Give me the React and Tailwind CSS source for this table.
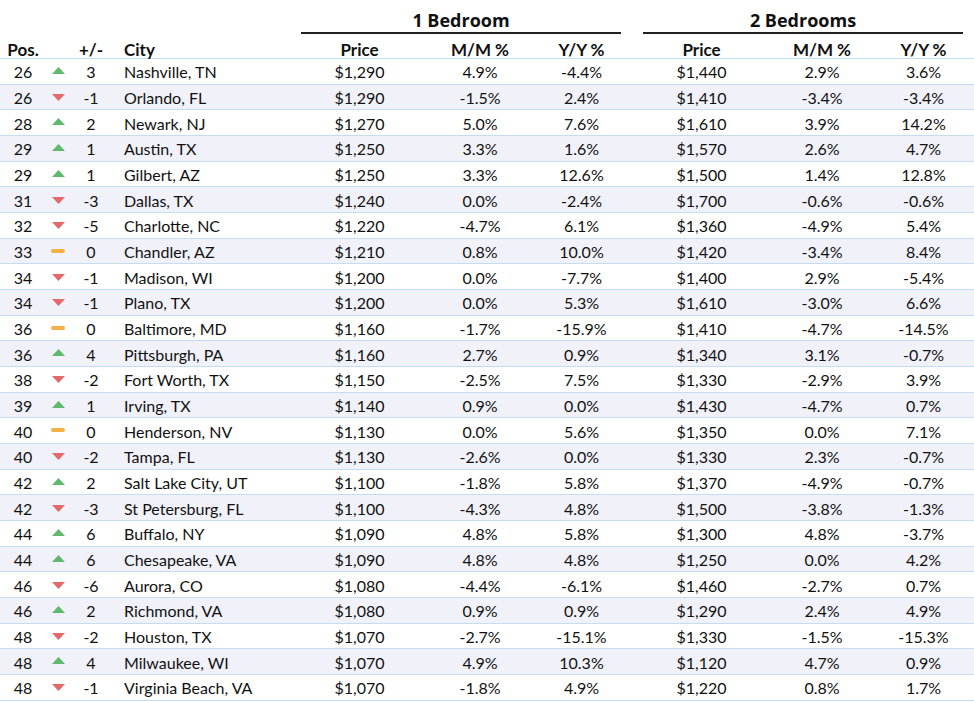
import React from "react";

const rows = [
  [26, "up", 3, "Nashville, TN", "$1,290", "4.9%", "-4.4%", "$1,440", "2.9%", "3.6%"],
  [26, "down", -1, "Orlando, FL", "$1,290", "-1.5%", "2.4%", "$1,410", "-3.4%", "-3.4%"],
  [28, "up", 2, "Newark, NJ", "$1,270", "5.0%", "7.6%", "$1,610", "3.9%", "14.2%"],
  [29, "up", 1, "Austin, TX", "$1,250", "3.3%", "1.6%", "$1,570", "2.6%", "4.7%"],
  [29, "up", 1, "Gilbert, AZ", "$1,250", "3.3%", "12.6%", "$1,500", "1.4%", "12.8%"],
  [31, "down", -3, "Dallas, TX", "$1,240", "0.0%", "-2.4%", "$1,700", "-0.6%", "-0.6%"],
  [32, "down", -5, "Charlotte, NC", "$1,220", "-4.7%", "6.1%", "$1,360", "-4.9%", "5.4%"],
  [33, "flat", 0, "Chandler, AZ", "$1,210", "0.8%", "10.0%", "$1,420", "-3.4%", "8.4%"],
  [34, "down", -1, "Madison, WI", "$1,200", "0.0%", "-7.7%", "$1,400", "2.9%", "-5.4%"],
  [34, "down", -1, "Plano, TX", "$1,200", "0.0%", "5.3%", "$1,610", "-3.0%", "6.6%"],
  [36, "flat", 0, "Baltimore, MD", "$1,160", "-1.7%", "-15.9%", "$1,410", "-4.7%", "-14.5%"],
  [36, "up", 4, "Pittsburgh, PA", "$1,160", "2.7%", "0.9%", "$1,340", "3.1%", "-0.7%"],
  [38, "down", -2, "Fort Worth, TX", "$1,150", "-2.5%", "7.5%", "$1,330", "-2.9%", "3.9%"],
  [39, "up", 1, "Irving, TX", "$1,140", "0.9%", "0.0%", "$1,430", "-4.7%", "0.7%"],
  [40, "flat", 0, "Henderson, NV", "$1,130", "0.0%", "5.6%", "$1,350", "0.0%", "7.1%"],
  [40, "down", -2, "Tampa, FL", "$1,130", "-2.6%", "0.0%", "$1,330", "2.3%", "-0.7%"],
  [42, "up", 2, "Salt Lake City, UT", "$1,100", "-1.8%", "5.8%", "$1,370", "-4.9%", "-0.7%"],
  [42, "down", -3, "St Petersburg, FL", "$1,100", "-4.3%", "4.8%", "$1,500", "-3.8%", "-1.3%"],
  [44, "up", 6, "Buffalo, NY", "$1,090", "4.8%", "5.8%", "$1,300", "4.8%", "-3.7%"],
  [44, "up", 6, "Chesapeake, VA", "$1,090", "4.8%", "4.8%", "$1,250", "0.0%", "4.2%"],
  [46, "down", -6, "Aurora, CO", "$1,080", "-4.4%", "-6.1%", "$1,460", "-2.7%", "0.7%"],
  [46, "up", 2, "Richmond, VA", "$1,080", "0.9%", "0.9%", "$1,290", "2.4%", "4.9%"],
  [48, "down", -2, "Houston, TX", "$1,070", "-2.7%", "-15.1%", "$1,330", "-1.5%", "-15.3%"],
  [48, "up", 4, "Milwaukee, WI", "$1,070", "4.9%", "10.3%", "$1,120", "4.7%", "0.9%"],
  [48, "down", -1, "Virginia Beach, VA", "$1,070", "-1.8%", "4.9%", "$1,220", "0.8%", "1.7%"],
];

// little arrows in the +/- column
const Trend = ({ dir }) => {
  if (dir === "up")
    return (
      <svg width="13" height="7" viewBox="0 0 13 7" className="-mt-[4px]">
        <polygon points="6.5,0 13,7 0,7" fill="#5fb86b" />
      </svg>
    );
  if (dir === "down")
    return (
      <svg width="13" height="7" viewBox="0 0 13 7" className="-mt-[1px]">
        <polygon points="0,0 13,0 6.5,7" fill="#e4696b" />
      </svg>
    );
  return <div className="w-[14px] h-[4px] rounded-sm bg-[#f4b046] -mt-[3px]" />;
};

const Group = ({ title }) => (
  <div className="w-[320px] flex flex-col items-center">
    <div
      className="text-[18px] font-bold leading-[22px] pt-[9px]"
      style={{ fontFamily: "'Open Sans', sans-serif" }}
    >
      {title}
    </div>
    <div className="w-full h-[2px] bg-[#222] mt-[1px]" />
  </div>
);

export default function App() {
  return (
    <div
      className="w-[974px] h-[702px] overflow-hidden bg-white text-[#111]"
      style={{ fontFamily: "Lato, 'Open Sans', sans-serif" }}
    >
      <div className="flex h-[34px]">
        <div className="w-[301px]" />
        <Group title="1 Bedroom" />
        <div className="w-[22px]" />
        <Group title="2 Bedrooms" />
      </div>
      <div className="flex items-end h-[25px] leading-none border-b border-[#c6dcf0] text-[17px] font-bold">
        <div className="w-[46px] text-center">Pos.</div>
        <div className="w-[24px]" />
        <div className="w-[42px] text-center">+/-</div>
        <div className="w-[12px]" />
        <div className="w-[177px]">City</div>
        <div className="w-[117px] text-center">Price</div>
        <div className="w-[124px] text-center">M/M %</div>
        <div className="w-[79px] text-center">Y/Y %</div>
        <div className="w-[22px]" />
        <div className="w-[117px] text-center">Price</div>
        <div className="w-[124px] text-center">M/M %</div>
        <div className="w-[79px] text-center">Y/Y %</div>
      </div>
      {rows.map((r, i) => (
        <div
          key={i}
          className={`flex items-center pt-[2px] h-[25.68px] border-b border-[#c6dcf0] text-[16px] ${
            i % 2 === 1 ? "bg-[#f1f1fa]" : "bg-white"
          }`}
        >
          <div className="w-[46px] text-center">{r[0]}</div>
          <div className="w-[24px] flex justify-center">
            <Trend dir={r[1]} />
          </div>
          <div className="w-[42px] text-center">{r[2]}</div>
          <div className="w-[12px]" />
          <div className="w-[177px]">{r[3]}</div>
          <div className="w-[117px] text-center">{r[4]}</div>
          <div className="w-[124px] text-center">{r[5]}</div>
          <div className="w-[79px] text-center">{r[6]}</div>
          <div className="w-[22px]" />
          <div className="w-[117px] text-center">{r[7]}</div>
          <div className="w-[124px] text-center">{r[8]}</div>
          <div className="w-[79px] text-center">{r[9]}</div>
        </div>
      ))}
    </div>
  );
}
